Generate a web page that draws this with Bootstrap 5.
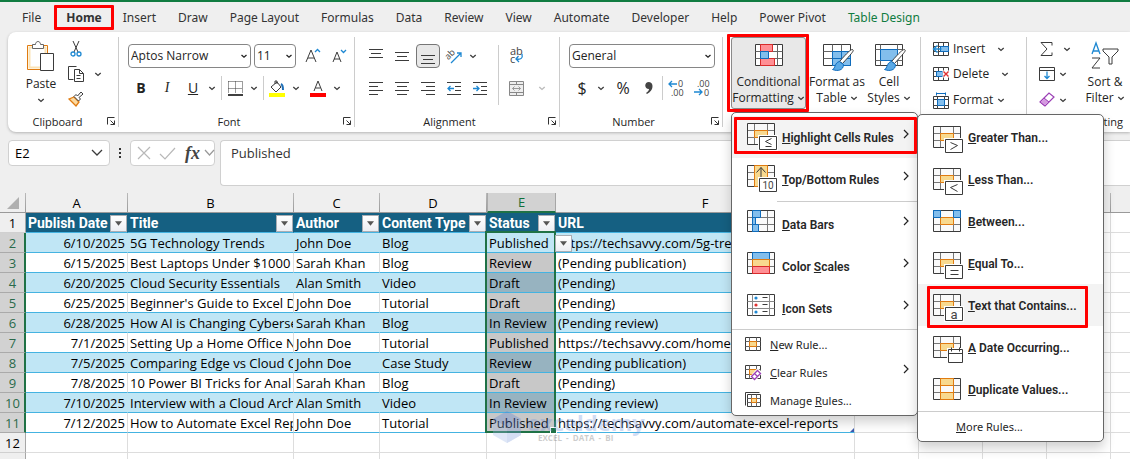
<!DOCTYPE html>
<html lang="en">
<head>
<meta charset="utf-8">
<meta name="viewport" content="width=device-width, initial-scale=1">
<title>Content tracker</title>
<link href="https://cdn.jsdelivr.net/npm/bootstrap@5.3.0/dist/css/bootstrap.min.css" rel="stylesheet">
<style>
  :root { --excel: #107c41; --ink: #242424; --chev: url("data:image/svg+xml,%3Csvg xmlns='http://www.w3.org/2000/svg' viewBox='0 0 8 8'%3E%3Cpath d='M1.5 3 4 5.2 6.5 3' fill='none' stroke='%23222' stroke-width='1.3'/%3E%3C/svg%3E"); }
  body { font-family: "Open Sans", "Noto Sans", sans-serif; font-size: 12px; line-height: 16px; color: var(--ink); background: #efefef; }
  svg { display: block; flex: none; overflow: visible; fill: none; stroke: #3b3b3b; }
  svg text { stroke: none; fill: #444; }
  button { color: inherit; }
  .plain { background: none; border: 0; padding: 0; display: flex; align-items: center; justify-content: center; }
  .callout { position: relative; }
  .callout::after { content: ""; position: absolute; inset: var(--in, 0); border: 3px solid #f00; border-radius: 1px; pointer-events: none; z-index: 1100; }

  .tabs { border-top: 2px solid var(--excel); height: 32px; padding-left: 11px; font-family: "Noto Sans", sans-serif; }
  .tabs a { color: #333; text-decoration: none; padding: 8px 11px 6px; white-space: nowrap; }
  .tabs .home { font-weight: 700; padding: 8px 12px 6px; margin: 0 -2px 0 2px; --in: 3px 0 2px 0; }
  .tabs .design { color: var(--excel); }

  .ribbon { margin-left: 8px; padding: 5px 0 2px; border-radius: 8px 0 0 8px; background: #fff; box-shadow: 0 1px 3px #00000040; }
  .group { display: flex; flex-direction: column; flex: none; height: 93px; position: relative; background: linear-gradient(#ccc, #ccc) right top / 1px 90px no-repeat; }
  .group:last-child { background: none; }
  .group-body { height: 76px; display: flex; }
  .group-name { text-align: center; line-height: 17px; padding-right: 16px; font-size: 11px; }
  .launcher { position: absolute; right: 3px; bottom: 4px; }
  .two-rows { display: grid; grid-template-rows: 24px 24px; row-gap: 8px; padding-top: 7px; }
  .tools { display: flex; align-items: center; }
  .tool { width: 26px; height: 24px; font-size: 14px; }
  .narrow { width: 11px; height: 24px; }
  .pressed { background: #e8e8e8; border: 1px solid #767676; border-radius: 4px; width: 24px; margin: 0 1px; }
  .sep { width: 1px; height: 24px; background: #ccc; }
  .pick { --bs-form-select-bg-img: var(--chev); appearance: none; height: 24px; min-height: 0; padding: 0 14px 0 2px; font-size: 12px; line-height: 20px; color: var(--ink); border: 1px solid #868686; border-radius: 4px; background: #fff var(--chev) right 2px center / 8px 8px no-repeat; }
  .big { display: flex; flex-direction: column; align-items: center; line-height: 16px; white-space: nowrap; border: 0; background: none; padding: 7px 0 0; height: 72px; }
  .big svg.pic { height: 30px; }
  .big .ln { display: flex; align-items: center; gap: 3px; }
  .big.on { background: #e8e8e8; border: 1px solid #8a8a8a; border-radius: 3px; padding: 6px 0 0; }
  .rowtool { height: 26px; gap: 4px; justify-content: flex-start; }
  .rowtool:first-child { height: 24px; }

  .menu { font-size: 11px; line-height: 16px; color: var(--ink); min-width: 0; padding: 3px 0 0; border: 1px solid #666; border-radius: 5px; box-shadow: 0 6px 12px #00000030; background: #fff; }
  .menu .dropdown-item { display: flex; align-items: center; padding: 0 8px 0 15px; height: 42px; gap: 7px; font-family: Roboto, sans-serif; font-size: 12px; font-weight: 600; color: #262626; }
  .menu .dropdown-item > span { padding-top: 2px; }
  .menu .dropdown-item.slim { height: 28px; gap: 9px; padding-left: 13px; font-family: "Noto Sans", sans-serif; font-size: 11px; font-weight: 400; }
  .menu .dropdown-item.lit { background: #f3f3f3; }
  .menu hr { margin: 1px 0; height: 1px; border: 0; background: #ccc; opacity: 1; }
  .menu .go { margin: 0 -1px 6px auto; }
  .menu-rules { top: 75px; left: 0; width: 187px; padding-bottom: 1px; z-index: 1000; }
  .menu-cells { top: 1px; left: 100%; width: 187px; padding: 1px 0 0; z-index: 1050; }
  .menu-cells .dropdown-item.slim { padding: 0 0 2px 38px; }

  .formula { padding: 8px 0 7px 8px; gap: 5px; }
  .fbox { background: #fff; border: 1px solid #d0d0d0; border-radius: 4px; height: 26px; }
  .namebox { width: 102px; padding: 0 7px 0 0; }
  .namebox input { border: 0; width: 80px; padding: 0 0 0 6px; font-size: 13px; background: none; outline: 0; }
  .fx { width: 85px; padding: 0 2px 0 7px; gap: 10px; }
  .fx i { font: italic 700 18px "Liberation Serif", serif; color: #444; }
  .entry { flex: 1; height: 46px; border-right: 0; border-radius: 4px 0 0 4px; padding: 2px 10px; font-size: 13px; line-height: 20px; resize: none; outline: 0; color: #333; }

  .sheet { flex: 1; overflow: hidden; background: #fff; min-height: 0; }
  .cells { table-layout: fixed; width: 1175px; border-collapse: separate; border-spacing: 0; font-size: 13px; line-height: 18px; color: #000; }
  .cells th, .cells td { height: 20px; padding: 1px 2px 0; border: 0 solid #ddd; border-width: 0 1px 1px 0; white-space: nowrap; overflow: hidden; }
  .cells thead th { background: #efefef; border-color: #a6a6a6; text-align: center; font-size: 13px; font-weight: 400; border-image: linear-gradient(#bbb, #999) 1; }
  .cells thead .sel { background: #d2d2d2; color: #0f703b; border-image: none; border-bottom: 2px solid #1f7246; border-left: 1px solid #aaa; padding-top: 0; }
  .cells tbody th { background: #efefef; font-size: 13px; font-weight: 400; text-align: center; padding: 1px 0 0; border-color: #d0d0d0 #a6a6a6 #d0d0d0; }
  .cells .picked > th { background: #d2d2d2; color: #2a6a4a; border-right: 2px solid #1f7246; border-bottom-color: #aaa; padding-left: 1px; }
  .cells .heads td { background: #156082; color: #fff; font: 700 14px/18px Roboto, sans-serif; border-color: #156082; border-bottom-color: #44b3e1; padding-right: 0; }
  .cells .heads td.bare { background: #fff; border-color: #ddd; }
  .picked td:nth-child(-n+7) { border-bottom-color: #44b3e1; }
  .picked:nth-child(even) td:nth-child(-n+7) { background: #c0e6f5; border-right-color: #c0e6f5; }
  .picked td:nth-child(2) { text-align: right; }
  .picked td:nth-child(6) { background: #c8c8c8; }
  .picked:nth-child(even) td:nth-child(6) { background: #97b3c0; }
  .picked td.active:nth-child(6) { background: #c0e6f5 !important; overflow: visible; position: relative; }
  .range { position: absolute; left: -2px; right: -1px; top: -2px; height: 202px; border: 2px solid #1f7246; pointer-events: none; z-index: 2; }
  .range::after { content: ""; position: absolute; right: -3px; bottom: -3px; width: 5px; height: 5px; background: #1f7246; border: 1px solid #fff; box-sizing: content-box; }
  .filter { flex: none; width: 17px; height: 17px; border: 1px solid #a9adb3; background: linear-gradient(#fff, #eceef3); }
  .float-filter { position: absolute; left: 100%; top: 2px; z-index: 3; }
  .corner { position: relative; }
  .corner::after { content: ""; position: absolute; right: 0; bottom: 0; border: 2px solid #3c5ab0; border-top-color: transparent; border-left-color: transparent; }
  .mark-logo { position: absolute; left: 493px; top: 411px; z-index: 5; opacity: .32; pointer-events: none; gap: 6px; }
  .mark-logo b { font: 700 22px/22px "Open Sans", sans-serif; color: #6f94dc; }
  .mark-logo small { font: 700 8px/9px "Open Sans", sans-serif; color: #666; padding-left: 11px; white-space: pre; }
</style>
</head>
<body class="vh-100 overflow-hidden d-flex flex-column position-relative">

<svg width="0" height="0" class="position-absolute" aria-hidden="true">
  <symbol id="chev" viewBox="0 0 8 8"><path d="M1.3 3 4 5.4 6.7 3" stroke-width="1.3"/></symbol>
  <symbol id="launch" viewBox="-.5 -.5 9 9"><path d="M0 7V0h7M3 3l4 4M7 3v4H3" stroke="#333"/></symbol>
  <symbol id="tri" viewBox="0 0 8 5"><path d="M0 0h8L4 5z" fill="#555" stroke="none"/></symbol>
  <symbol id="go" viewBox="0 0 8 10"><path d="m2 1 4 4-4 4" stroke="#222" stroke-width="1.2"/></symbol>
  <symbol id="grid" viewBox="-.5 -.5 28 22"><path d="M0 0h27v21H0z" fill="#fafafa" stroke="none"/><path d="M7 0v21M20 0v21M0 7h27M0 14h27" stroke="#777"/><path d="M0 0h27v21H0z"/></symbol>
  <symbol id="rule" viewBox="-.5 -.5 28 22"><use href="#grid" x="-.5" y="-.5" width="28" height="22"/><path d="M7 7h13v7H7z" fill="#f8d98f" stroke="#e07b10"/></symbol>
  <symbol id="mini" viewBox="-.5 -.5 16 14"><path d="M0 0h15v13H0z" fill="#fff"/><path d="M4 0v13M11 0v13M0 4h15M0 9h15" stroke="#666"/></symbol>
</svg>

<nav class="tabs d-flex" aria-label="Ribbon tabs">
  <a href="#">File</a><a href="#" class="home callout">Home</a><a href="#">Insert</a><a href="#">Draw</a><a href="#">Page Layout</a><a href="#">Formulas</a><a href="#">Data</a><a href="#">Review</a><a href="#">View</a><a href="#">Automate</a><a href="#">Developer</a><a href="#">Help</a><a href="#">Power Pivot</a><a href="#" class="design">Table Design</a>
</nav>

<header class="ribbon d-flex">
  <section class="group" style="width:111px">
    <div class="group-body">
      <button class="big" style="width:66px;padding-top:4px">
        <svg width="28" height="31" viewBox="-.5 -.5 28 31"><path d="M0 4h20v24H0z" fill="#fff" stroke="#e07b10"/><path d="M2 6h16v20H2z" stroke="#fbe3b5" stroke-width="2"/><path d="M5 7V3h3c0-4 5-4 5 0h3v4z" fill="#fff" stroke="#666"/><path d="M13 12h13v17H13z" fill="#fff"/></svg>
        <span class="mt-1">Paste</span><svg width="8" height="8" class="mt-1"><use href="#chev"/></svg>
      </button>
      <div class="d-flex flex-column pt-1 gap-1" style="width:20px;margin-left:-8px">
        <button class="plain" aria-label="Cut" style="height:16px"><svg width="12" height="16" viewBox="0 0 12 16"><path d="M3 0l5 11M9 0 4 11" /><circle cx="3" cy="13" r="2" stroke="#1e88d2" stroke-width="1.3"/><circle cx="9" cy="13" r="2" stroke="#1e88d2" stroke-width="1.3"/></svg></button>
        <button class="plain my-1" aria-label="Copy" style="height:18px"><svg width="16" height="16" viewBox="-.5 -.5 16 16"><path d="M5 13H0V0h8M6 3h5l4 4v8H6zM11 3v4h4M8 9h4M8 12h4" /></svg></button>
        <button class="plain" aria-label="Format Painter" style="height:16px"><svg width="16" height="16" viewBox="0 0 16 16"><path d="M1 8l5-2 5 5-3 4z" fill="#fbd9a0" stroke="#e07b10" stroke-width="1.3"/><path d="M6 5.500l2-2 1.500 1.500L13 1l2 2-4 3.500L12.500 8l-2 2z" fill="#fff"/></svg></button>
      </div>
      <button class="plain align-self-start" aria-label="Copy options" style="width:24px;height:74px"><svg width="8" height="8"><use href="#chev"/></svg></button>
    </div>
    <div class="group-name" style="padding-right:12px">Clipboard</div><button class="plain launcher" aria-label="Clipboard settings"><svg width="9" height="9"><use href="#launch"/></svg></button>
  </section>

  <section class="group" style="width:236px">
    <div class="group-body two-rows" style="padding-left:9px">
      <div class="tools">
        <select class="form-select pick" aria-label="Font" style="width:123px"><option>Aptos Narrow</option></select>
        <select class="form-select pick" aria-label="Font size" style="width:42px;margin-left:3px"><option>11</option></select>
        <button class="plain tool ms-1" aria-label="Increase font size"><svg width="16" height="16" viewBox="0 0 16 16"><path d="M1 14 6 2l5 12M3 10h6"/><path d="m10 4 2.500-2.500L15 4" stroke="#1e88d2" stroke-width="1.300"/></svg></button>
        <button class="plain tool" aria-label="Decrease font size"><svg width="14" height="14" viewBox="0 0 14 14"><path d="M1 13 5 3l4 10M2 10h6"/><path d="m9 1 2.500 2.500L14 1" stroke="#1e88d2" stroke-width="1.300"/></svg></button>
      </div>
      <div class="tools">
        <button class="plain tool fw-bold" aria-label="Bold">B</button>
        <button class="plain tool" aria-label="Italic" style="font-family:'Liberation Serif',serif"><i>I</i></button>
        <button class="plain tool" aria-label="Underline"><u>U</u></button>
        <button class="plain narrow" aria-label="Underline options"><svg width="8" height="8"><use href="#chev"/></svg></button>
        <span class="sep ms-1"></span>
        <button class="plain tool" aria-label="Borders"><svg width="15" height="15" viewBox="-.5 -.5 15 15"><path d="M0 0h14M0 0v12M14 0v12M7 0v12M0 7h14" stroke-dasharray="1 1"/><path d="M-.5 13.500h15" stroke="#000" stroke-width="1.500"/></svg></button>
        <button class="plain narrow" aria-label="Border options"><svg width="8" height="8"><use href="#chev"/></svg></button>
        <span class="sep ms-1"></span>
        <button class="plain tool" aria-label="Fill colour"><svg width="16" height="17" viewBox="0 0 16 17"><path d="M2 7l6-5 4 5-5 5zM6 4V1h2v3"/><path d="M12 4c2 1 2 3 2 6" stroke="#1e6fb8" stroke-width="2"/><path d="M0 13h16v4H0z" fill="#ff0" stroke="none"/></svg></button>
        <button class="plain narrow" aria-label="Fill options"><svg width="8" height="8"><use href="#chev"/></svg></button>
        <button class="plain tool ms-1" aria-label="Font colour"><svg width="16" height="17" viewBox="0 0 16 17"><path d="m4 11 4-10 4 10M5.500 8h5"/><path d="M0 13h16v4H0z" fill="red" stroke="none"/></svg></button>
        <button class="plain narrow" aria-label="Font colour options"><svg width="8" height="8"><use href="#chev"/></svg></button>
      </div>
    </div>
    <div class="group-name">Font</div><button class="plain launcher" aria-label="Font settings"><svg width="9" height="9"><use href="#launch"/></svg></button>
  </section>

  <section class="group" style="width:205px">
    <div class="group-body ps-2">
      <div class="two-rows">
        <div class="tools">
          <button class="plain tool" aria-label="Top align"><svg width="14" height="14" viewBox="0 -.5 14 14"><path d="M0 0h14M2 4h10M0 8h14"/></svg></button>
          <button class="plain tool" aria-label="Middle align"><svg width="14" height="14" viewBox="0 -.5 14 14"><path d="M0 3h14M2 7h10M0 11h14"/></svg></button>
          <button class="plain tool pressed" aria-label="Bottom align"><svg width="14" height="14" viewBox="0 -.5 14 14"><path d="M0 6h14M2 10h10M0 14h14"/></svg></button>
          <button class="plain tool" aria-label="Orientation"><svg width="16" height="16" viewBox="0 0 16 16"><text x="0" y="9" font-size="9" transform="rotate(-45 5 8)">ab</text><path d="M5 15 15 5M11 5h4v4" stroke="#1e88d2" stroke-width="1.300"/></svg></button>
          <button class="plain narrow" aria-label="Orientation options"><svg width="8" height="8"><use href="#chev"/></svg></button>
        </div>
        <div class="tools">
          <button class="plain tool" aria-label="Align left"><svg width="14" height="13" viewBox="0 -.5 14 13"><path d="M0 0h14M0 4h9M0 8h14M0 12h9"/></svg></button>
          <button class="plain tool" aria-label="Centre"><svg width="14" height="13" viewBox="0 -.5 14 13"><path d="M0 0h14M2 4h10M0 8h14M2 12h10"/></svg></button>
          <button class="plain tool" aria-label="Align right"><svg width="14" height="13" viewBox="0 -.5 14 13"><path d="M0 0h14M5 4h9M0 8h14M5 12h9"/></svg></button>
          <button class="plain tool" aria-label="Decrease indent"><svg width="14" height="13" viewBox="0 -.5 14 13"><path d="M0 0h14M8 4h6M8 8h6M0 12h14"/><path d="M7 6H1M3.500 3.500 1 6l2.500 2.500" stroke="#1e88d2" stroke-width="1.300"/></svg></button>
          <button class="plain tool" aria-label="Increase indent"><svg width="14" height="13" viewBox="0 -.5 14 13"><path d="M0 0h14M8 4h6M8 8h6M0 12h14"/><path d="M0 6h6M3.500 3.500 6 6 3.500 8.500" stroke="#1e88d2" stroke-width="1.300"/></svg></button>
        </div>
      </div>
      <span class="sep mt-2" style="height:60px;margin-left:5px"></span>
      <div class="two-rows ps-1">
        <div class="tools"><button class="plain tool" aria-label="Wrap text"><svg width="15" height="18" viewBox="0 0 15 18"><text x="1" y="8" font-size="11">ab</text><text x="1" y="16" font-size="11">c</text><path d="M13 7c1 4-1 6-6 5M9.500 9 7 12l3 3" stroke="#1e88d2" stroke-width="1.300"/></svg></button></div>
        <div class="tools"><button class="plain tool" aria-label="Merge" disabled><svg width="15" height="15" viewBox="-.5 -.5 15 15"><path d="M0 0h14v14H0zM0 3h14M0 11h14M7 0v3M7 11v3" fill="#eee" stroke="#888"/><path d="M3 7h8M5 5 3 7l2 2M9 5l2 2-2 2" stroke="#999"/></svg></button><button class="plain tool" aria-label="Merge options" disabled><svg width="8" height="8" opacity=".35"><use href="#chev"/></svg></button></div>
      </div>
    </div>
    <div class="group-name">Alignment</div><button class="plain launcher" aria-label="Alignment settings"><svg width="9" height="9"><use href="#launch"/></svg></button>
  </section>

  <section class="group" style="width:163px">
    <div class="group-body two-rows" style="padding-left:9px">
      <div class="tools"><select class="form-select pick" aria-label="Number format" style="width:146px"><option>General</option></select></div>
      <div class="tools">
        <button class="plain tool fs-6" aria-label="Currency">$</button>
        <button class="plain narrow" aria-label="Currency options"><svg width="8" height="8"><use href="#chev"/></svg></button>
        <button class="plain tool ms-1 fs-6" aria-label="Percent">%</button>
        <button class="plain tool" aria-label="Comma style"><svg width="8" height="12" viewBox="0 0 8 12"><path d="M4 0c5 0 5 9-2 12l-1-1c2-1 3-3 3-4-5 0-5-7 0-7z" fill="#444" stroke="none"/></svg></button>
        <span class="sep"></span>
        <button class="plain tool" aria-label="Increase decimal"><svg width="16" height="16" viewBox="0 0 16 16"><text x="10" y="7" font-size="9">0</text><text x="3" y="16" font-size="9">.00</text><path d="M9 4H1M4 1 1 4l3 3" stroke="#1e88d2" stroke-width="1.300"/></svg></button>
        <button class="plain tool" aria-label="Decrease decimal"><svg width="16" height="16" viewBox="0 0 16 16"><text x="3" y="7" font-size="9">.00</text><text x="10" y="16" font-size="9">0</text><path d="M0 12h8M5 9l3 3-3 3" stroke="#1e88d2" stroke-width="1.300"/></svg></button>
      </div>
    </div>
    <div class="group-name">Number</div><button class="plain launcher" aria-label="Number settings"><svg width="9" height="9"><use href="#launch"/></svg></button>
  </section>

  <section class="group" style="width:198px">
    <div class="group-body ps-2">
      <div class="dropdown callout" style="--in:-3px -3px 1px -4px">
        <button class="big on" style="width:75px" aria-expanded="true">
          <svg class="pic" width="28" height="30" viewBox="-.5 -.5 28 30"><path d="M0 0h27v21H0z" fill="#fff"/><path d="M5 0v21M13 0v21M22 0v21M0 7h27M0 14h27" stroke="#666"/><path d="M5 0h12v7H5zM5 14h14v7H5z" fill="#ff8f94" stroke="#d92b2b"/><path d="M5 7h8v7H5z" fill="#83beec" stroke="#0f6cbd"/></svg>
          <span>Conditional</span><span class="ln">Formatting <svg width="8" height="8"><use href="#chev"/></svg></span>
        </button>
        <ul class="dropdown-menu show menu menu-rules">
          <li>
            <a href="#" class="dropdown-item lit callout" style="--in:1px 0 4px 2px"><svg width="28" height="28" viewBox="-.5 -.5 28 28"><use href="#rule" x="-.5" y="-.5" width="28" height="22"/><path d="M12 13h17v13H12z" fill="#fff" stroke="#fff" stroke-width="3"/><path d="M12 13h17v13H12zM24 15l-6 3 6 3M18 23h6" fill="#fff"/></svg><span><u>H</u>ighlight Cells Rules</span><svg class="go" width="8" height="10"><use href="#go"/></svg></a>
            <ul class="dropdown-menu show menu menu-cells">
              <li><a href="#" class="dropdown-item"><svg width="28" height="22" viewBox="-.5 -.5 28 22"><use href="#rule" x="-.5" y="-.5" width="28" height="22"/><path d="M12 13h17v13H12z" fill="#fff" stroke="#fff" stroke-width="3"/><path d="M12 13h17v13H12zM17 16l7 3-7 4" fill="#fff"/></svg><span><u>G</u>reater Than...</span></a></li>
              <li><a href="#" class="dropdown-item"><svg width="28" height="22" viewBox="-.5 -.5 28 22"><use href="#rule" x="-.5" y="-.5" width="28" height="22"/><path d="M12 13h17v13H12z" fill="#fff" stroke="#fff" stroke-width="3"/><path d="M12 13h17v13H12zM24 16l-7 3 7 4" fill="#fff"/></svg><span><u>L</u>ess Than...</span></a></li>
              <li><a href="#" class="dropdown-item"><svg width="28" height="22" viewBox="-.5 -.5 28 22"><use href="#rule" x="-.5" y="-.5" width="28" height="22"/><path d="M0 0h7v7H0zM20 0h7v7h-7z" fill="#83beec" stroke="#0f6cbd"/></svg><span><u>B</u>etween...</span></a></li>
              <li><a href="#" class="dropdown-item"><svg width="28" height="22" viewBox="-.5 -.5 28 22"><use href="#rule" x="-.5" y="-.5" width="28" height="22"/><path d="M12 13h17v13H12z" fill="#fff" stroke="#fff" stroke-width="3"/><path d="M12 13h17v13H12zM17 18h8M17 22h8" fill="#fff"/></svg><span><u>E</u>qual To...</span></a></li>
              <li><a href="#" class="dropdown-item lit callout" style="--in:2px 15px -2px 9px"><svg width="28" height="22" viewBox="-.5 -.5 28 22"><use href="#rule" x="-.5" y="-.5" width="28" height="22"/><path d="M12 13h17v13H12z" fill="#fff" stroke="#fff" stroke-width="3"/><path d="M12 13h17v13H12z" fill="#fff"/><text x="17" y="24" font-size="13" font-weight="400">a</text></svg><span><u>T</u>ext that Contains...</span></a></li>
              <li><a href="#" class="dropdown-item"><svg width="28" height="22" viewBox="-.5 -.5 28 22"><use href="#rule" x="-.5" y="-.5" width="28" height="22"/><path d="M15 13h14v13H15z" fill="#fff" stroke="#fff" stroke-width="3"/><path d="M15 13h14v13H15zM15 17h14M18 11v4M26 11v4" fill="#fff"/></svg><span><u>A</u> Date Occurring...</span></a></li>
              <li><a href="#" class="dropdown-item"><svg width="28" height="22" viewBox="-.5 -.5 28 22"><use href="#grid" x="-.5" y="-.5" width="28" height="22"/><path d="M7 0h13v7H7zM7 14h13v7H7z" fill="#f8d98f" stroke="#e07b10"/><path d="M7 0v21M20 0v21" stroke="#e07b10"/></svg><span><u>D</u>uplicate Values...</span></a></li>
              <li><hr></li>
              <li><a href="#" class="dropdown-item slim"><span><u>M</u>ore Rules...</span></a></li>
            </ul>
          </li>
          <li><a href="#" class="dropdown-item"><svg width="28" height="28" viewBox="-.5 -.5 28 28"><use href="#grid" x="-.5" y="-.5" width="28" height="22"/><path d="M7 0h13v21H7z" fill="#f8d98f" stroke="#e07b10"/><path d="M13.500 14V2M9 7l4.500-5L18 7"/><path d="M12 13h17v13H12z" fill="#fff" stroke="#fff" stroke-width="3"/><path d="M12 13h17v13H12z" fill="#fff"/><text x="15" y="23" font-size="10" font-weight="400">10</text></svg><span><u>T</u>op/Bottom Rules</span><svg class="go" width="8" height="10"><use href="#go"/></svg></a></li>
          <li><hr style="margin-left:45px"></li>
          <li><a href="#" class="dropdown-item"><svg width="28" height="28" viewBox="-.5 -.5 28 28"><use href="#grid" x="-.5" y="-.5" width="28" height="22"/><path d="M5 0h8v7H5zM5 7h3v7H5zM5 14h6v7H5z" fill="#83beec" stroke="#0f6cbd"/></svg><span><u>D</u>ata Bars</span><svg class="go" width="8" height="10"><use href="#go"/></svg></a></li>
          <li><a href="#" class="dropdown-item"><svg width="28" height="28" viewBox="-.5 -.5 28 28"><use href="#grid" x="-.5" y="-.5" width="28" height="22"/><path d="M5 0h17v7H5z" fill="#83beec" stroke="#0f6cbd"/><path d="M5 7h17v7H5z" fill="#f8d98f" stroke="#e07b10"/><path d="M5 14h17v7H5z" fill="#ff8f94" stroke="#d92b2b"/></svg><span>Color <u>S</u>cales</span><svg class="go" width="8" height="10"><use href="#go"/></svg></a></li>
          <li><a href="#" class="dropdown-item"><svg width="28" height="28" viewBox="-.5 -.5 28 28"><path d="M0 0h27v21H0z" fill="#fff"/><path d="M5 0v21M22 0v21M0 7h27M0 14h27" stroke="#888"/><path d="M15 3h5M15 10h5M15 17h5"/><g stroke="none"><circle cx="8.500" cy="3.500" r="1.600" fill="#1e88d2"/><circle cx="8.500" cy="10.500" r="1.600" fill="#e03131"/><circle cx="8.500" cy="17.500" r="1.600" fill="#1e88d2"/></g></svg><span><u>I</u>con Sets</span><svg class="go" width="8" height="10"><use href="#go"/></svg></a></li>
          <li><hr class="mt-0 mb-0"></li>
          <li><a href="#" class="dropdown-item slim"><svg width="16" height="14" viewBox="-.5 -.5 16 14"><use href="#mini" x="-.5" y="-.5" width="16" height="14"/><path d="M4 4h7v5H4z" fill="#f8d98f" stroke="#e07b10"/></svg><span><u>N</u>ew Rule...</span></a></li>
          <li><a href="#" class="dropdown-item slim"><svg width="16" height="14" viewBox="-.5 -.5 16 14"><use href="#mini" x="-.5" y="-.5" width="16" height="14"/><path d="M4 4h7v5H4z" fill="#f8d98f" stroke="#e07b10"/><path d="m6 11 6-7 4 3-6 7z" fill="#fff" stroke="#fff" stroke-width="2"/><path d="m6 11 6-6 3 3-6 6zM9 8l3 3" fill="#fff" stroke="#9b3fb5" stroke-width="1.300"/></svg><span><u>C</u>lear Rules</span><svg class="go" width="8" height="10"><use href="#go"/></svg></a></li>
          <li><a href="#" class="dropdown-item slim"><svg width="16" height="14" viewBox="-.5 -.5 16 14"><path d="M0 12V-1h14"/><path d="M2 1h13v12H2z" fill="#fff"/><path d="M6 1v12M11 1v12M2 5h13M2 9h13" stroke="#666"/><path d="M6 5h5v4H6z" fill="#f8d98f" stroke="#e07b10"/></svg><span>Manage <u>R</u>ules...</span></a></li>
        </ul>
      </div>
      <button class="big ms-1" style="width:54px">
        <svg class="pic" width="28" height="30" viewBox="-.5 -.5 28 30"><path d="M0 0h27v21H0z" fill="#fff"/><path d="M9 7h18v14H9z" fill="#83beec" stroke="none"/><path d="M9 0v21M18 0v21M0 7h27M0 14h27" stroke="#666"/><path d="M9 7h18v14H9zM18 7v14M9 14h18" stroke="#0f6cbd"/><path d="M29 5c2 1 0 3-10 14l-3-2C24 8 27 5 29 5z" fill="#fff"/><path d="M16 17l4 3c0 6-6 7-11 5 3-1 2-7 7-8z" fill="#5aa9e6" stroke="#0f6cbd"/></svg>
        <span>Format as</span><span class="ln">Table <svg width="8" height="8"><use href="#chev"/></svg></span>
      </button>
      <button class="big" style="width:50px">
        <svg class="pic" width="28" height="30" viewBox="-.5 -.5 28 30"><path d="M0 0h27v21H0z" fill="#fff"/><path d="M5 0v21M22 0v21M0 5h27M0 16h27" stroke="#666"/><path d="M5 5h17v11H5z" fill="#83beec" stroke="#0f6cbd"/><path d="M29 5c2 1 0 3-10 14l-3-2C24 8 27 5 29 5z" fill="#fff"/><path d="M16 17l4 3c0 6-6 7-11 5 3-1 2-7 7-8z" fill="#5aa9e6" stroke="#0f6cbd"/></svg>
        <span>Cell</span><span class="ln">Styles <svg width="8" height="8"><use href="#chev"/></svg></span>
      </button>
    </div>
  </section>

  <section class="group" style="width:106px">
    <div class="group-body flex-column" style="padding-left:12px">
      <button class="plain rowtool"><svg width="16" height="14" viewBox="-.5 -.5 16 14"><path d="M0 0h15v13H0z" fill="#fff"/><path d="M5 0v13M10 0v13M0 4h15M0 9h15" stroke="#444"/><path d="M7 4h8v5H7z" fill="#83beec" stroke="#0f6cbd"/><path d="M0 6.500h8M4 3 0 6.500 4 10" fill="#fff" stroke="#1e88d2" stroke-width="1.400"/></svg>Insert<svg width="8" height="8" class="ms-2"><use href="#chev"/></svg></button>
      <button class="plain rowtool"><svg width="16" height="14" viewBox="-.5 -.5 16 14"><path d="M0 0h15v13H0z" fill="#fff"/><path d="M5 0v13M10 0v13M0 4h15M0 9h15" stroke="#444"/><path d="M3 4h6v5H3z" fill="#83beec" stroke="#0f6cbd"/><path d="M9 3h7v7H9z" fill="#fff" stroke="none"/><path d="m10 4 5 5m0-5-5 5" stroke="#e03131" stroke-width="1.400"/></svg>Delete<svg width="8" height="8" class="ms-2"><use href="#chev"/></svg></button>
      <button class="plain rowtool"><svg width="16" height="15" viewBox="-.5 -.5 16 15"><path d="M0 3h15v12H0z" fill="#fff"/><path d="M4 3v12M11 3v12M0 6h15M0 12h15" stroke="#444"/><path d="M4 6h7v6H4z" fill="#83beec" stroke="#0f6cbd"/><path d="M3-1v3M12-1v3M3 0h9" stroke="#0f6cbd"/></svg>Format<svg width="8" height="8"><use href="#chev"/></svg></button>
    </div>
  </section>

  <section class="group flex-grow-1">
    <div class="group-body ps-2">
      <div class="d-flex flex-column ps-1" style="width:44px">
        <button class="plain rowtool gap-2" aria-label="AutoSum"><svg width="16" height="14" viewBox="0 -.5 16 14"><path d="M13 3V0H2l6 6.500L2 13h11v-3"/></svg><svg width="8" height="8"><use href="#chev"/></svg></button>
        <button class="plain rowtool" aria-label="Fill"><svg width="16" height="14" viewBox="-.5 -.5 16 14"><path d="M0 0h15v13H0zM0 3h15"/><path d="M7.500 4v7M5 8.500 7.500 11 10 8.500" stroke="#1e88d2" stroke-width="1.300"/></svg><svg width="8" height="8"><use href="#chev"/></svg></button>
        <button class="plain rowtool" aria-label="Clear"><svg width="16" height="14" viewBox="0 0 16 14"><path d="m1 9 9-9 5 4-9 9z" fill="#fff" stroke="#9b3fb5" stroke-width="1.200"/><path d="m1 9 4-4 5 4-4 4z" fill="#d59be0" stroke="#9b3fb5"/></svg><svg width="8" height="8"><use href="#chev"/></svg></button>
      </div>
      <button class="big" style="width:52px">
        <svg class="pic" width="28" height="30" viewBox="0 0 28 30"><path d="M1 10 5-1l4 11M2.500 7h5" stroke="#1e88d2" stroke-width="1.300"/><path d="M1 14h8L1 24h8"/><path d="M12 5h15v2l-6 6v7h-3v-7l-6-6z" fill="#fff"/></svg>
        <span>Sort &amp;</span><span class="ln">Filter <svg width="8" height="8"><use href="#chev"/></svg></span>
      </button>
    </div>
    <div class="group-name text-end" style="padding-right:8px">Editing</div>
  </section>
</header>

<div class="formula d-flex align-items-start">
  <div class="fbox namebox d-flex align-items-center justify-content-between"><input aria-label="Name box" value="E2"><svg width="10" height="6" viewBox="0 0 10 6"><path d="m0 0 5 5 5-5" stroke-width="1.300"/></svg></div>
  <svg width="10" height="26" viewBox="0 0 10 26"><path d="M4 8h2v2H4zM4 12h2v2H4zM4 16h2v2H4z" fill="#333" stroke="none"/></svg>
  <div class="fbox fx d-flex align-items-center">
    <button class="plain" aria-label="Cancel"><svg width="12" height="12" viewBox="0 0 12 12"><path d="m0 0 12 12M12 0 0 12" stroke="#b8b8b8" stroke-width="1.200"/></svg></button>
    <button class="plain" aria-label="Enter"><svg width="15" height="11" viewBox="0 0 15 11"><path d="m0 6 5 5L15 0" stroke="#b8b8b8" stroke-width="1.200"/></svg></button>
    <button class="plain" aria-label="Insert function"><i>fx</i></button>
    <svg width="9" height="6" viewBox="0 0 9 6" style="margin-left:-5px"><path d="m0 0 4.500 5L9 0" stroke="#999" stroke-width="1.200"/></svg>
  </div>
  <textarea class="fbox entry" aria-label="Formula bar">Published</textarea>
</div>

<main class="sheet">
<table class="cells">
  <colgroup><col style="width:26px"><col style="width:102px"><col style="width:166px"><col style="width:86px"><col style="width:107px"><col style="width:69px"><col style="width:299px"><col style="width:64px"><col style="width:64px"><col style="width:64px"><col style="width:64px"><col style="width:64px"></colgroup>
  <thead><tr><th><svg width="12" height="12" viewBox="0 0 12 12" class="ms-auto me-1"><path d="M12 0v12H0z" fill="#b0b0b0" stroke="none"/></svg></th><th>A</th><th>B</th><th>C</th><th>D</th><th class="sel">E</th><th>F</th><th></th><th></th><th></th><th></th><th></th></tr></thead>
  <tbody>
    <tr class="heads"><th>1</th>
      <td><div class="d-flex justify-content-between align-items-center">Publish Date<button class="plain filter" aria-label="Filter dates"><svg width="7" height="5"><use href="#tri"/></svg></button></div></td>
      <td><div class="d-flex justify-content-between align-items-center">Title<button class="plain filter" aria-label="Filter titles"><svg width="7" height="5"><use href="#tri"/></svg></button></div></td>
      <td><div class="d-flex justify-content-between align-items-center">Author<button class="plain filter" aria-label="Filter authors"><svg width="7" height="5"><use href="#tri"/></svg></button></div></td>
      <td><div class="d-flex justify-content-between align-items-center">Content Type<button class="plain filter" aria-label="Filter types"><svg width="7" height="5"><use href="#tri"/></svg></button></div></td>
      <td><div class="d-flex justify-content-between align-items-center">Status<button class="plain filter" aria-label="Filter status"><svg width="7" height="5"><use href="#tri"/></svg></button></div></td>
      <td>URL</td><td class="bare"></td><td class="bare"></td><td class="bare"></td><td class="bare"></td><td class="bare"></td></tr>
    <tr class="picked"><th>2</th><td>6/10/2025</td><td>5G Technology Trends</td><td>John Doe</td><td>Blog</td><td class="active">Published<span class="range"></span><button class="plain filter float-filter" aria-label="Choose status"><svg width="7" height="5"><use href="#tri"/></svg></button></td><td>https://techsavvy.com/5g-tre</td><td></td><td></td><td></td><td></td><td></td></tr>
    <tr class="picked"><th>3</th><td>6/15/2025</td><td>Best Laptops Under $1000</td><td>Sarah Khan</td><td>Blog</td><td>Review</td><td>(Pending publication)</td><td></td><td></td><td></td><td></td><td></td></tr>
    <tr class="picked"><th>4</th><td>6/20/2025</td><td>Cloud Security Essentials</td><td>Alan Smith</td><td>Video</td><td>Draft</td><td>(Pending)</td><td></td><td></td><td></td><td></td><td></td></tr>
    <tr class="picked"><th>5</th><td>6/25/2025</td><td>Beginner's Guide to Excel D</td><td>John Doe</td><td>Tutorial</td><td>Draft</td><td>(Pending)</td><td></td><td></td><td></td><td></td><td></td></tr>
    <tr class="picked"><th>6</th><td>6/28/2025</td><td>How AI is Changing Cyberse</td><td>Sarah Khan</td><td>Blog</td><td>In Review</td><td>(Pending review)</td><td></td><td></td><td></td><td></td><td></td></tr>
    <tr class="picked"><th>7</th><td>7/1/2025</td><td>Setting Up a Home Office N</td><td>John Doe</td><td>Tutorial</td><td>Published</td><td>https://techsavvy.com/home</td><td></td><td></td><td></td><td></td><td></td></tr>
    <tr class="picked"><th>8</th><td>7/5/2025</td><td>Comparing Edge vs Cloud C</td><td>John Doe</td><td>Case Study</td><td>Review</td><td>(Pending publication)</td><td></td><td></td><td></td><td></td><td></td></tr>
    <tr class="picked"><th>9</th><td>7/8/2025</td><td>10 Power BI Tricks for Anal</td><td>Sarah Khan</td><td>Blog</td><td>Draft</td><td>(Pending)</td><td></td><td></td><td></td><td></td><td></td></tr>
    <tr class="picked"><th>10</th><td>7/10/2025</td><td>Interview with a Cloud Arch</td><td>Alan Smith</td><td>Video</td><td>In Review</td><td>(Pending review)</td><td></td><td></td><td></td><td></td><td></td></tr>
    <tr class="picked"><th>11</th><td>7/12/2025</td><td>How to Automate Excel Rep</td><td>John Doe</td><td>Tutorial</td><td>Published</td><td class="corner">https://techsavvy.com/automate-excel-reports</td><td></td><td></td><td></td><td></td><td></td></tr>
    <tr><th>12</th><td></td><td></td><td></td><td></td><td></td><td></td><td></td><td></td><td></td><td></td><td></td></tr>
    <tr><th></th><td></td><td></td><td></td><td></td><td></td><td></td><td></td><td></td><td></td><td></td><td></td></tr>
  </tbody>
</table>
</main>

<div class="mark-logo d-flex">
  <svg width="28" height="32" viewBox="0 0 28 32"><g stroke="none"><path d="M14 0l14 8v16l-14 8L0 24V8z" fill="#9db8e8"/><path d="m14 0 14 8-14 8L0 8z" fill="#5b7fd0"/><path d="M14 16l14-8v16l-14 8z" fill="#7c9bdd"/></g></svg>
  <div class="d-flex flex-column"><b>exceldemy</b><small>EXCEL  -  DATA  -  BI</small></div>
</div>

<script src="https://cdn.jsdelivr.net/npm/bootstrap@5.3.0/dist/js/bootstrap.bundle.min.js"></script>
</body>
</html>
